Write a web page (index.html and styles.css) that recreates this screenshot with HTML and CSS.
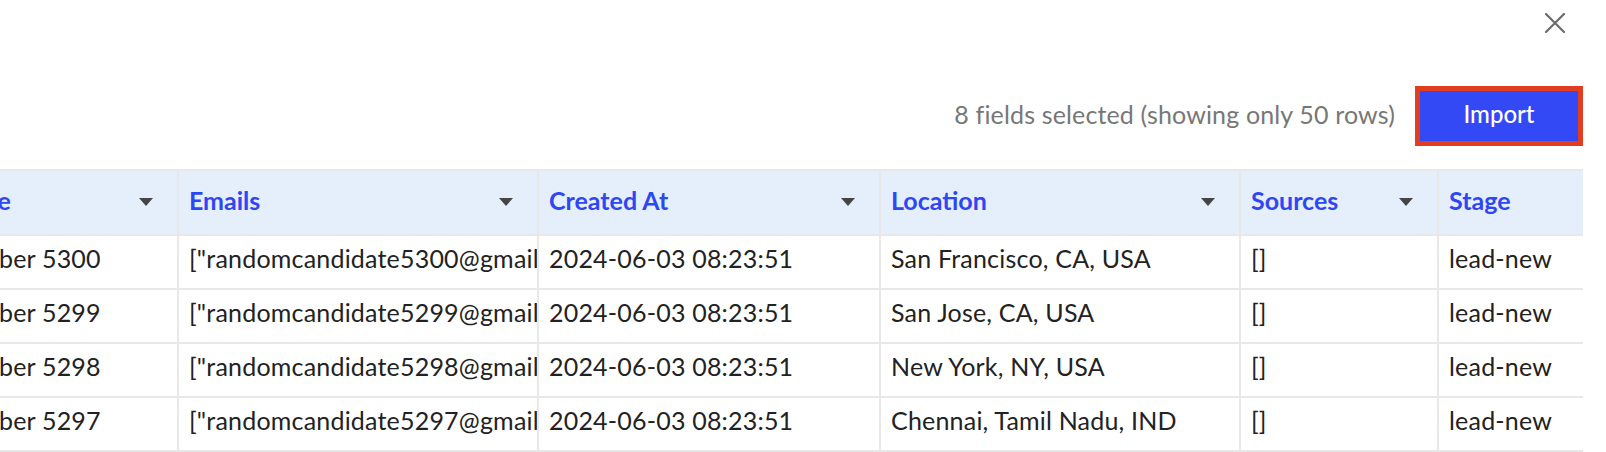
FILE: index.html
```html
<!DOCTYPE html>
<html lang="en">
<head>
    <meta charset="UTF-8">
    <meta name="viewport" content="width=device-width, initial-scale=1.0">
    <title>Import preview</title>
    <link rel="stylesheet" href="styles.css">
</head>
<body>
    <div class="dialog">
        <div class="dialog-top">
            <button class="close" aria-label="Close">
                <svg width="20" height="20" viewBox="0 0 20 20">
                    <path d="M1 1 L19 19 M19 1 L1 19" stroke="#6b6b6b" stroke-width="2.2" stroke-linecap="round" fill="none"/>
                </svg>
            </button>
        </div>

        <div class="toolbar">
            <span class="summary">8 fields selected (showing only 50 rows)</span>
            <button class="import">Import</button>
        </div>

        <div class="grid-wrap">
            <table class="grid">
                <colgroup>
                    <col class="c-name">
                    <col class="c-emails">
                    <col class="c-created">
                    <col class="c-location">
                    <col class="c-sources">
                    <col class="c-stage">
                </colgroup>
                <thead>
                    <tr>
                        <th><div class="head">Name<span class="caret"></span></div></th>
                        <th><div class="head">Emails<span class="caret"></span></div></th>
                        <th><div class="head">Created At<span class="caret"></span></div></th>
                        <th><div class="head">Location<span class="caret"></span></div></th>
                        <th><div class="head">Sources<span class="caret"></span></div></th>
                        <th><div class="head">Stage<span class="caret"></span></div></th>
                    </tr>
                </thead>
                <tbody>
                    <tr>
                        <td>Number 5300</td>
                        <td>["randomcandidate5300@gmail.com"]</td>
                        <td>2024-06-03 08:23:51</td>
                        <td>San Francisco, CA, USA</td>
                        <td>[]</td>
                        <td>lead-new</td>
                    </tr>
                    <tr>
                        <td>Number 5299</td>
                        <td>["randomcandidate5299@gmail.com"]</td>
                        <td>2024-06-03 08:23:51</td>
                        <td>San Jose, CA, USA</td>
                        <td>[]</td>
                        <td>lead-new</td>
                    </tr>
                    <tr>
                        <td>Number 5298</td>
                        <td>["randomcandidate5298@gmail.com"]</td>
                        <td>2024-06-03 08:23:51</td>
                        <td>New York, NY, USA</td>
                        <td>[]</td>
                        <td>lead-new</td>
                    </tr>
                    <tr>
                        <td>Number 5297</td>
                        <td>["randomcandidate5297@gmail.com"]</td>
                        <td>2024-06-03 08:23:51</td>
                        <td>Chennai, Tamil Nadu, IND</td>
                        <td>[]</td>
                        <td>lead-new</td>
                    </tr>
                </tbody>
            </table>
        </div>
    </div>
</body>
</html>
```

FILE: styles.css
```css
body {
    margin: 0;
    background-color: #ffffff;
    font-family: 'Lato', 'Liberation Sans', sans-serif;
    color: #222222;
}
.dialog {
    padding-right: 23px;
    overflow: hidden;
}
.dialog-top {
    display: flex;
    justify-content: flex-end;
    padding-top: 13px;
    height: 33px;
}
.close {
    width: 20px;
    height: 20px;
    padding: 0;
    margin-right: 18px;
    border: none;
    background: none;
    cursor: pointer;
}
.close svg {
    display: block;
}
.toolbar {
    display: flex;
    justify-content: flex-end;
    align-items: center;
    gap: 20px;
    margin-top: 40px;
    margin-bottom: 23px;
}
.summary {
    font-size: 25px;
    letter-spacing: 0.15px;
    color: #777777;
    padding-bottom: 5px;
}
.import {
    width: 168px;
    height: 60px;
    padding: 0 0 5px;
    border: 5px solid #e23d1f;
    background-color: #3249f5;
    color: #ffffff;
    font-family: inherit;
    font-size: 24px;
    font-weight: 500;
    cursor: pointer;
}
.grid-wrap {
    overflow: hidden;
}
/* first column is scrolled partly out of view */
.grid {
    margin-left: -67px;
    border-collapse: collapse;
    table-layout: fixed;
    width: 1704px;
    font-size: 25px;
    letter-spacing: 0.2px;
}
.c-name { width: 244px; }
.c-emails { width: 360px; }
.c-created { width: 342px; }
.c-location { width: 360px; }
.c-sources { width: 198px; }
.c-stage { width: 200px; }
.grid th, .grid td {
    border: 2px solid #e8e8e8;
    padding: 0 12px 0 10px;
    white-space: nowrap;
    overflow: hidden;
    text-align: left;
}
.grid th {
    height: 57px;
    padding-bottom: 6px;
    padding-right: 24px;
    background-color: #e5effc;
    color: #2f46f3;
    font-weight: 700;
    letter-spacing: 0;
}
.grid td {
    height: 43px;
    padding-bottom: 9px;
}
.head {
    display: flex;
    justify-content: space-between;
    align-items: center;
}
.caret {
    width: 0;
    height: 0;
    margin-top: 5px;
    border-left: 7px solid transparent;
    border-right: 7px solid transparent;
    border-top: 8px solid #454545;
}
```
